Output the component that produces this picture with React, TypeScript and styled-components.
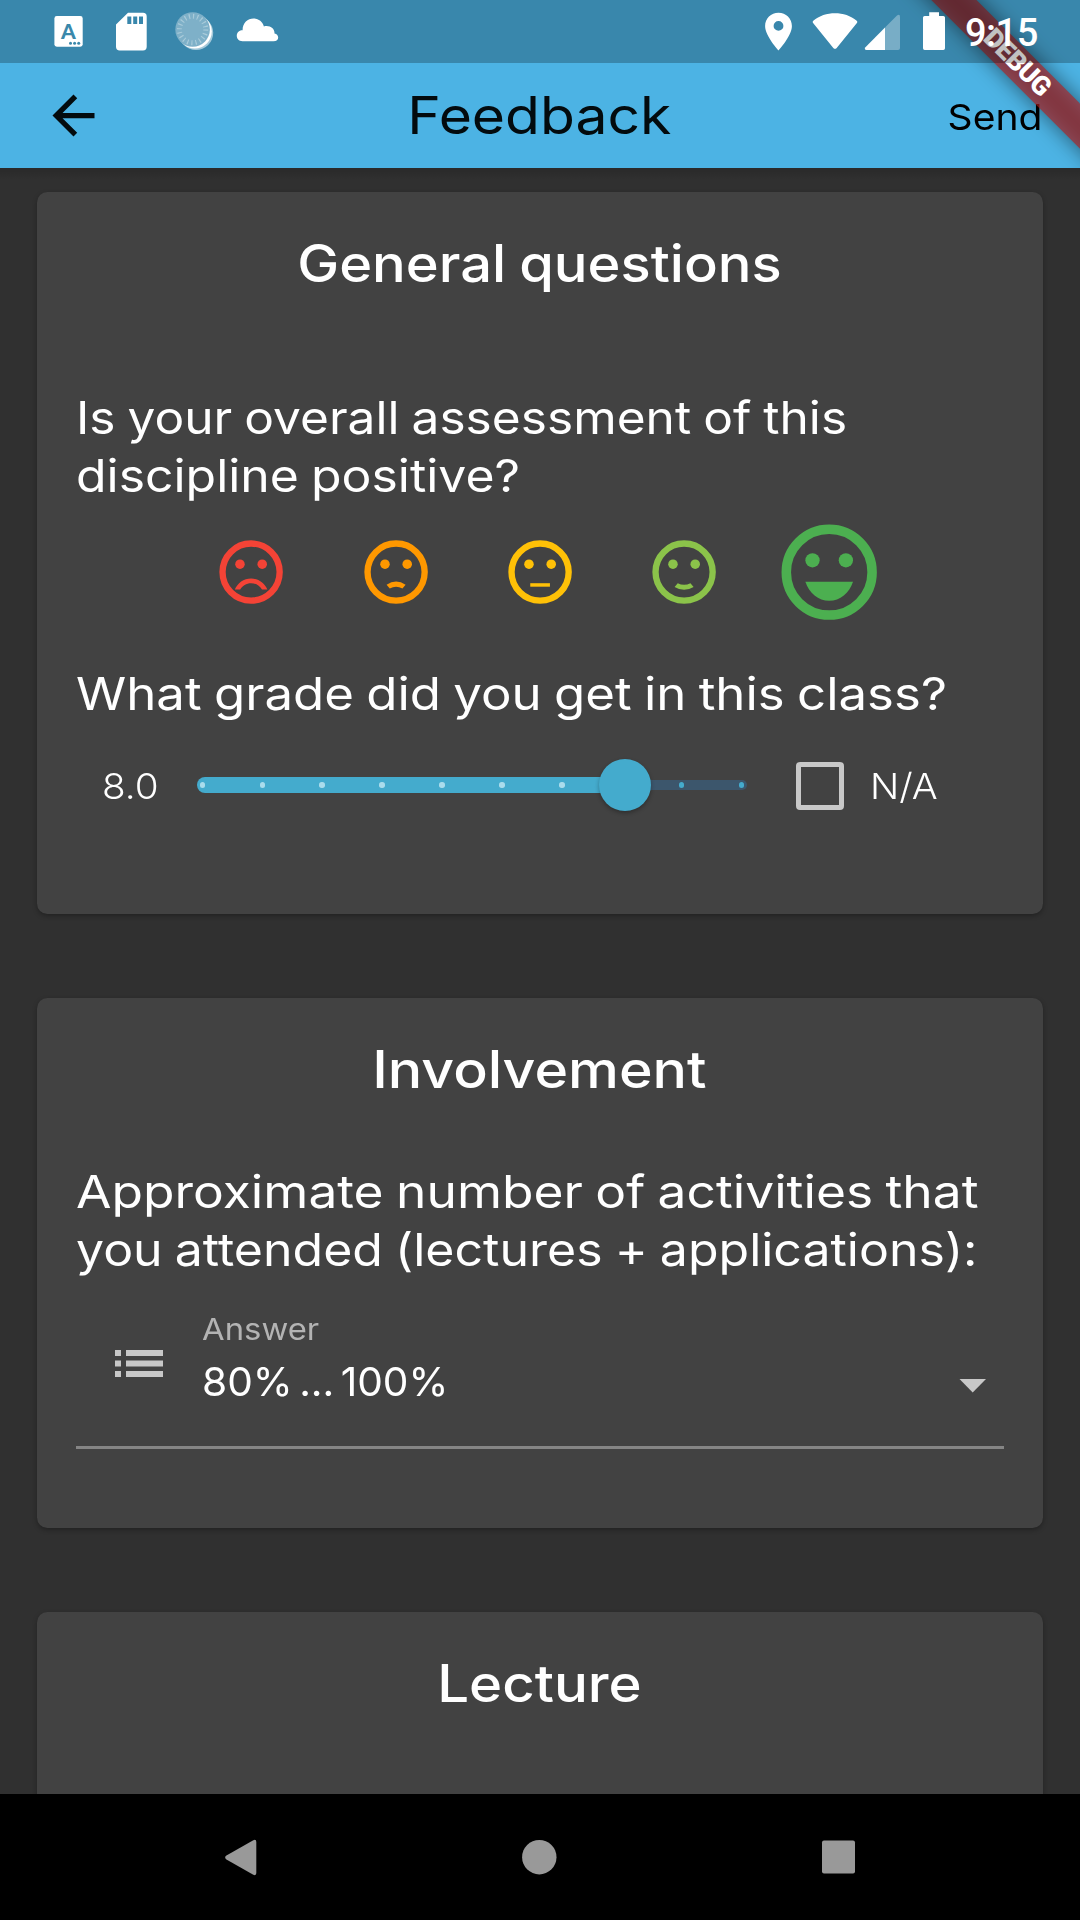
import React from "react";
import styled, { createGlobalStyle } from "styled-components";

const GlobalStyle = createGlobalStyle`
  * { box-sizing: border-box; }
  body { margin: 0; background: #303030; overflow: hidden; }
`;

const Screen = styled.div`
  width: 1080px;
  height: 1920px;
  display: flex;
  flex-direction: column;
  overflow: hidden;
  background: #303030;
  color: #fff;
  font-family: Inter, "Open Sans", sans-serif;
`;

const Header = styled.header`
  position: relative;
  z-index: 1;
  flex: none;
  height: 168px;
  overflow: hidden;
  background: #4cb3e4;
`;

const HeaderShadow = styled.div`
  flex: none;
  height: 12px;
  margin-bottom: -12px;
  background: linear-gradient(rgba(0, 0, 0, 0.14), rgba(0, 0, 0, 0));
`;

const StatusBar = styled.div`
  position: relative;
  z-index: 2;
  display: flex;
  align-items: flex-start;
  justify-content: space-between;
  height: 63px;
  padding: 12px 41px 0 54px;
  background: rgba(0, 0, 0, 0.245);
`;

const StatusGroup = styled.div`
  display: flex;
  align-items: flex-start;
`;

const Glyph = styled.svg<{ $gap?: number }>`
  display: block;
  flex: none;
  margin-right: ${(p) => p.$gap ?? 0}px;
  overflow: visible;
`;

const IconLetter = styled.text`
  font: 900 21px Lato, sans-serif;
  fill: #3a88ab;
`;

const Clock = styled.span`
  width: 74px;
  font: 500 38px/40px Roboto, sans-serif;
  letter-spacing: -0.5px;
  white-space: nowrap;
  margin: 1px 0 0 -1px;
`;

const Wide = styled.span<{ $stretch: number; $origin?: string }>`
  display: inline-block;
  white-space: nowrap;
  transform: scaleX(${(p) => p.$stretch});
  transform-origin: ${(p) => p.$origin ?? "left"} center;
`;

const AppBar = styled.div`
  display: grid;
  grid-template-columns: 1fr auto 1fr;
  align-items: center;
  height: 105px;
  padding: 0 38px 0 42px;
  color: #030b0e;
`;

const AppTitle = styled.h1`
  margin: -2px 5px 0 0;
  font-size: 51.5px;
  font-weight: 400;
  line-height: 64px;
`;

const SendButton = styled.button`
  justify-self: end;
  padding: 2px 0 0;
  border: 0;
  background: none;
  color: #000;
  font: 400 36px/44px Inter, sans-serif;
`;

const DebugBanner = styled.div`
  position: absolute;
  z-index: 1;
  left: 817px;
  top: 47px;
  width: 400px;
  height: 31.5px;
  transform: rotate(45deg);
  &::before {
    content: "";
    position: absolute;
    inset: 0;
    background: rgba(0, 0, 0, 0.5);
    filter: blur(10.4px);
  }
`;

const BannerLabel = styled.div`
  position: relative;
  height: 100%;
  background: rgba(183, 28, 28, 0.627);
  font: 900 26.8px/31.5px Roboto, sans-serif;
  letter-spacing: -0.7px;
  text-align: center;
`;

const Content = styled.main`
  flex: 1;
  min-height: 0;
  display: flex;
  flex-direction: column;
  gap: 84px;
  padding: 24px 37px 0;
  overflow: hidden;
`;

const Card = styled.section<{ $height: number }>`
  flex: none;
  display: flex;
  flex-direction: column;
  height: ${(p) => p.$height}px;
  padding: 39px 39px 0;
  border-radius: 10.5px;
  background: #424242;
  box-shadow: 0 2px 5px rgba(0, 0, 0, 0.3);
`;

const CardTitle = styled.h2`
  margin: 0 2px 0 0;
  font-size: 51.5px;
  font-weight: 500;
  line-height: 64px;
  text-align: center;
  word-spacing: -1.8px;
`;

const Question = styled.div<{ $top: number }>`
  display: flex;
  flex-direction: column;
  align-items: flex-start;
  margin-top: ${(p) => p.$top}px;
  font-size: 45.5px;
  font-weight: 400;
  line-height: 57.7px;
  word-spacing: -1.8px;
`;

const FaceRow = styled.div`
  display: grid;
  grid-template-columns: repeat(5, 144.4px);
  justify-content: center;
  place-items: center;
  height: 116px;
  margin-top: 10px;
`;

const GradeRow = styled.div`
  display: flex;
  align-items: center;
  height: 80px;
  margin-top: 23.5px;
  padding-left: 26px;
  font-size: 36px;
  font-weight: 300;
`;

const GradeValue = styled.span`
  width: 95px;
`;

const Slider = styled.div`
  position: relative;
  display: flex;
  align-items: center;
  width: 550px;
  height: 16px;
  margin: 0 49px 2px 0;
`;

const ActiveTrack = styled.div`
  flex: none;
  width: 428px;
  height: 16px;
  border-radius: 8px 0 0 8px;
  background: #44abcd;
`;

const InactiveTrack = styled.div`
  flex: 1;
  height: 10.4px;
  border-radius: 0 5px 5px 0;
  background: #3c566c;
`;

const Ticks = styled.div`
  position: absolute;
  inset: 0;
  display: flex;
  align-items: center;
  justify-content: space-between;
  padding: 0 2.6px;
`;

const Tick = styled.i<{ $active: boolean }>`
  width: 5.4px;
  height: 5.4px;
  border-radius: 50%;
  background: ${(p) => (p.$active ? "#a9dcec" : "#44abcd")};
`;

const Thumb = styled.div`
  position: absolute;
  left: 401.6px;
  top: -18.2px;
  width: 52.4px;
  height: 52.4px;
  border-radius: 50%;
  background: #44abcd;
  box-shadow: 0 2px 4px rgba(0, 0, 0, 0.3);
`;

const Checkbox = styled.span`
  width: 48px;
  height: 48px;
  margin-right: 26px;
  border: 5.3px solid #c8c8c8;
  border-radius: 4px;
`;

const Field = styled.div`
  display: flex;
  align-items: flex-start;
  height: 170.6px;
  padding: 31px 17.5px 0 39px;
  border-bottom: 3px solid #858585;
`;

const ListGlyph = styled(Glyph)`
  margin-top: 41px;
`;

const ArrowGlyph = styled(Glyph)`
  margin: 70px 0 0 auto;
`;

const FieldText = styled.div`
  display: flex;
  flex-direction: column;
  align-items: flex-start;
  gap: 7px;
  margin-left: 38px;
`;

const FieldLabel = styled(Wide)`
  color: #b3b3b3;
  font-size: 30px;
  line-height: 40px;
`;

const FieldValue = styled(Wide)`
  font-size: 40px;
  line-height: 52px;
  word-spacing: -5px;
`;

const NavBar = styled.nav`
  flex: none;
  display: grid;
  grid-template-columns: repeat(3, 298.6px);
  justify-content: center;
  place-items: center;
  height: 126px;
  padding-right: 1px;
  background: #000;
`;

const mouths = {
  awful: "M12 14c-2.33 0-4.32 1.45-5.12 3.5h1.67c.69-1.19 1.97-2 3.45-2s2.75.81 3.45 2h1.67c-.8-2.05-2.79-3.5-5.12-3.5z",
  bad: "M9 16Q12 14 15 16L14 17.2Q12 16 10 17.2Z",
  neutral: "M8.9 15.5h6.2v1.1h-6.2z",
  good: "M9 16.7L10 15.5Q12 16.5 14 15.5L15 16.7Q12 18.5 9 16.7Z",
  great: "M12 18c2.28 0 4.22-1.66 5-4H7c.78 2.34 2.72 4 5 4z",
};

const faces: { mood: keyof typeof mouths; color: string }[] = [
  { mood: "awful", color: "#f44336" },
  { mood: "bad", color: "#ff9800" },
  { mood: "neutral", color: "#ffc107" },
  { mood: "good", color: "#8bc34a" },
  { mood: "great", color: "#4caf50" },
];

function Face({ mood, color, size }: { mood: keyof typeof mouths; color: string; size: number }) {
  return (
    <Glyph width={size} height={size} viewBox="0 0 24 24" fill={color}>
      <circle cx="12" cy="12" r="9" fill="none" stroke={color} strokeWidth="2" />
      <circle cx="8.5" cy="9.5" r="1.5" />
      <circle cx="15.5" cy="9.5" r="1.5" />
      <path d={mouths[mood]} />
    </Glyph>
  );
}

function StatusIcons() {
  return (
    <StatusBar>
      <StatusGroup>
        <Glyph $gap={33} width="29" height="38" viewBox="54 12 29 38">
          <rect x="54.4" y="16" width="28.3" height="30.7" rx="2.4" fill="#fff" />
          <IconLetter x="68.3" y="38.6" textAnchor="middle">A</IconLetter>
          <g fill="#3a88ab">
            <circle cx="70.5" cy="43.2" r="1.5" />
            <circle cx="74.6" cy="43.2" r="1.5" />
            <circle cx="78.7" cy="43.2" r="1.5" />
          </g>
        </Glyph>
        <Glyph $gap={28} width="31" height="38" viewBox="116 12 31 38">
          <path
            fill="#fff"
            fillRule="evenodd"
            d="M128 12.7H143Q146.7 12.7 146.7 16.4V46.8Q146.7 50.4 143 50.4H119.7Q116 50.4 116 46.8V24.4ZM127.3 16.4V24H131.3V16.4ZM133.2 16.4V24H137.2V16.4ZM139 16.4V24H143V16.4Z"
          />
        </Glyph>
        <Glyph $gap={24} width="38" height="38" viewBox="175 12 38 38">
          <circle cx="196" cy="32.8" r="17.2" fill="#a4c9da" />
          <circle cx="194.8" cy="31.6" r="17" fill="#fff" />
          <circle cx="192.6" cy="29.5" r="17.3" fill="#7eb0c8" />
          <circle cx="192.6" cy="29.5" r="13.2" fill="none" stroke="#a9cbda" strokeWidth="5" strokeDasharray="1.15 2.997" />
        </Glyph>
        <Glyph width="42" height="38" viewBox="237 12 42 38">
          <path
            fill="#fff"
            d="M242.5 41.3C234.8 41.3 234.9 30.2 242.6 30.3C242.5 22.6 247.7 18.4 253.5 18.4C258.6 18.4 262.6 21.7 263.9 26.4C270.2 25 274.8 28.8 274.5 33.5C279.8 34.6 279.3 41.3 273.5 41.3Z"
          />
        </Glyph>
      </StatusGroup>
      <StatusGroup>
        <Glyph $gap={20} width="27" height="38" viewBox="765 12 27 38">
          <path
            fill="#fff"
            fillRule="evenodd"
            d="M778.5 12.7C771 12.7 765.1 18.6 765.1 26C765.1 36 778.5 50.4 778.5 50.4S791.9 36 791.9 26C791.9 18.6 786 12.7 778.5 12.7ZM778.5 21A4.9 4.9 0 1 1 778.5 30.8A4.9 4.9 0 1 1 778.5 21Z"
          />
        </Glyph>
        <Glyph $gap={7} width="46" height="38" viewBox="812 12 46 38">
          <path
            fill="#fff"
            d="M812.9 22.7Q812.2 21.6 813.3 20.7C825 10.8 845 10.8 856.7 20.7Q857.8 21.6 857.1 22.7L836.7 48Q835 49.7 833.3 48Z"
          />
        </Glyph>
        <Glyph $gap={23} width="35" height="38" viewBox="865 12 35 38">
          <path fill="#fff" opacity="0.32" d="M885 27.6L897 15.6Q900 13.5 900 17V48Q900 50 898 50H885Z" />
          <path fill="#fff" d="M885 27.6V50H866.5Q864 50 865.2 47.6Z" />
        </Glyph>
        <Glyph $gap={21} width="22" height="38" viewBox="923 12 22 38">
          <path fill="#fff" d="M929.2 12.2H939V16H943.3Q945 16 945 17.6V48.3Q945 50 943.3 50H924.7Q923 50 923 48.3V17.6Q923 16 924.7 16H929.2Z" />
        </Glyph>
        <Clock>9:15</Clock>
      </StatusGroup>
    </StatusBar>
  );
}

export default function App() {
  const tickCount = 10;
  const grade = 8;
  return (
    <Screen>
      <GlobalStyle />
      <Header>
        <StatusIcons />
        <AppBar>
          <Glyph width="63" height="63" viewBox="0 0 24 24" fill="#030b0e">
            <path d="M20 11H7.83l5.59-5.59L12 4l-8 8 8 8 1.41-1.41L7.83 13H20v-2z" />
          </Glyph>
          <AppTitle>
            <Wide $stretch={1.107} $origin="center">Feedback</Wide>
          </AppTitle>
          <SendButton>
            <Wide $stretch={1.085} $origin="right">Send</Wide>
          </SendButton>
        </AppBar>
        <DebugBanner>
          <BannerLabel>DEBUG</BannerLabel>
        </DebugBanner>
      </Header>
      <HeaderShadow />
      <Content>
        <Card $height={722}>
          <CardTitle>
            <Wide $stretch={1.089} $origin="center">General questions</Wide>
          </CardTitle>
          <Question $top={94}>
            <Wide $stretch={1.091}>Is your overall assessment of this</Wide>
            <Wide $stretch={1.097}>discipline positive?</Wide>
          </Question>
          <FaceRow>
            {faces.map((f) => (
              <Face key={f.mood} mood={f.mood} color={f.color} size={f.mood === "great" ? 114.4 : 76.2} />
            ))}
          </FaceRow>
          <Question $top={34.5}>
            <Wide $stretch={1.12}>What grade did you get in this class?</Wide>
          </Question>
          <GradeRow>
            <GradeValue>
              <Wide $stretch={1.075}>8.0</Wide>
            </GradeValue>
            <Slider>
              <ActiveTrack />
              <InactiveTrack />
              <Ticks>
                {Array.from({ length: tickCount }, (_, i) => (
                  <Tick key={i} $active={i < grade} />
                ))}
              </Ticks>
              <Thumb />
            </Slider>
            <Checkbox />
            <Wide $stretch={1.07}>N/A</Wide>
          </GradeRow>
        </Card>
        <Card $height={530}>
          <CardTitle>
            <Wide $stretch={1.112} $origin="center">Involvement</Wide>
          </CardTitle>
          <Question $top={62}>
            <Wide $stretch={1.131}>Approximate number of activities that</Wide>
            <Wide $stretch={1.099}>you attended (lectures + applications):</Wide>
          </Question>
          <Field>
            <ListGlyph width="49" height="27" viewBox="0 0 49 27" fill="#c8c8c8">
              <path d="M0 0h6v6H0zM11 0h37v6H11zM0 10.5h6v6H0zM11 10.5h37v6H11zM0 21h6v6H0zM11 21h37v6H11z" />
            </ListGlyph>
            <FieldText>
              <FieldLabel $stretch={1.095}>Answer</FieldLabel>
              <FieldValue $stretch={1.017}>80% ... 100%</FieldValue>
            </FieldText>
            <ArrowGlyph width="28" height="14" viewBox="0 0 28 14" fill="#c8c8c8">
              <path d="M.5 0H27L13.7 13.4Z" />
            </ArrowGlyph>
          </Field>
        </Card>
        <Card $height={400}>
          <CardTitle>
            <Wide $stretch={1.095} $origin="center">Lecture</Wide>
          </CardTitle>
        </Card>
      </Content>
      <NavBar>
        <Glyph width="32" height="37" viewBox="0 0 32 37" fill="#999">
          <path d="M1 16.8L28.3 1.2Q31.3 0 31.3 3V34Q31.3 37 28.3 35.8L1 20.2Q-.7 18.5 1 16.8Z" />
        </Glyph>
        <Glyph width="35" height="35" viewBox="0 0 35 35" fill="#999">
          <circle cx="17.3" cy="17.2" r="17.2" />
        </Glyph>
        <Glyph width="33" height="34" viewBox="0 0 33 34" fill="#999">
          <rect x="0" y="0.5" width="33" height="33" rx="2" />
        </Glyph>
      </NavBar>
    </Screen>
  );
}
